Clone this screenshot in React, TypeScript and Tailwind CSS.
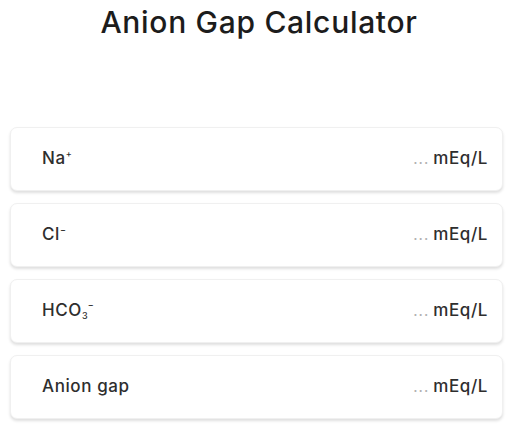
const rows = [
  { key: "na", label: <>Na<sup className="text-[9px] relative -top-[7px] tracking-normal">+</sup></> },
  { key: "cl", label: <>Cl<sup className="text-[9px] relative -top-[7px] tracking-normal">−</sup></> },
  {
    key: "hco3",
    label: (
      <>
        HCO<sub className="text-[9px] relative top-[3px] tracking-normal">3</sub>
        <sup className="text-[9px] relative -top-[7px] tracking-normal">−</sup>
      </>
    ),
  },
  { key: "ag", label: <>Anion gap</> },
];

export default function App() {
  return (
    <div className="w-[518px] h-[432px] bg-white font-['Inter',sans-serif] overflow-hidden">
      <h1 className="pt-[5px] text-center text-[30px] leading-[34px] font-medium text-[#1c1c1c] tracking-[0.7px]">
        Anion Gap Calculator
      </h1>
      <div className="mt-[88px] ml-[10px] w-[493px] flex flex-col gap-[12px]">
        {rows.map((r) => (
          <div
            key={r.key}
            className="h-[64px] rounded-[7px] bg-white border border-[#f0f0f0] shadow-[0_2px_3px_rgba(0,0,0,0.13)] flex items-center pl-[31px] pr-[14px]"
          >
            <span className="text-[17px] font-medium tracking-[0.6px] text-[#2e2e2e]">{r.label}</span>
            <span className="ml-auto flex items-baseline gap-[4px]">
              <span className="text-[15px] text-[#b0b0b0] tracking-[1px]">...</span>
              <span className="text-[17px] font-medium tracking-[0.6px] text-[#2e2e2e]">mEq/L</span>
            </span>
          </div>
        ))}
      </div>
    </div>
  );
}
